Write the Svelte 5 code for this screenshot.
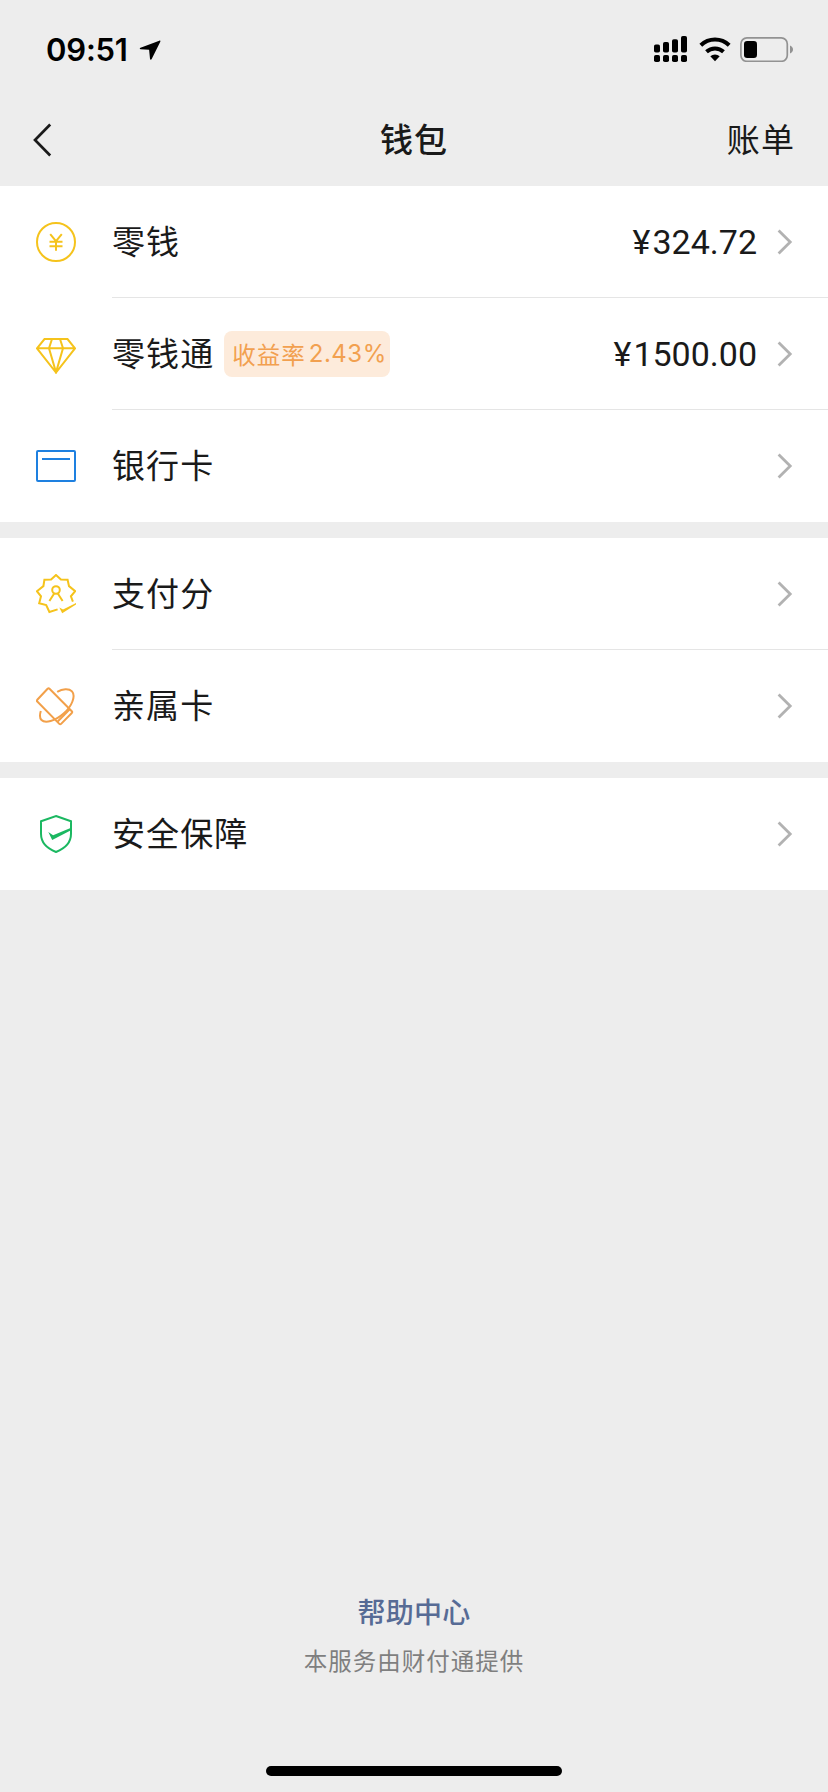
<script>
  const groups = [
    [
      { icon: 'coin', label: '零钱', amount: '324.72' },
      { icon: 'diamond', label: '零钱通', tag: '收益率', rate: '2.43%', amount: '1500.00' },
      { icon: 'card', label: '银行卡' }
    ],
    [
      { icon: 'score', label: '支付分' },
      { icon: 'family', label: '亲属卡' }
    ],
    [{ icon: 'shield', label: '安全保障' }]
  ];
</script>

<div class="screen">
  <header>
    <div class="status">
      <div class="clock">
        <span>09:51</span>
        <svg width="22" height="21" viewBox="0 0 22 21"><path d="M20.3.7 1.5 7.8c-1 .4-.9 1.3.1 1.4l8.5.6.9 9c.1 1.2 1.2 1.3 1.7.2L21.3 1.7c.3-.8-.2-1.3-1-1Z" /></svg>
      </div>
      <div class="signals">
        <svg width="34" height="27" viewBox="0 0 34 27">
          <rect x="0" y="8.5" width="6" height="8" rx="1.8" /><rect x="9" y="6" width="6" height="10.5" rx="1.8" />
          <rect x="18" y="3.3" width="6" height="13.2" rx="1.8" /><rect x="27" y="0" width="6" height="16.5" rx="1.8" />
          <rect x="0" y="19" width="6" height="7" rx="1.8" /><rect x="9" y="19" width="6" height="7" rx="1.8" />
          <rect x="18" y="19" width="6" height="7" rx="1.8" /><rect x="27" y="19" width="6" height="7" rx="1.8" />
        </svg>
        <svg class="wifi" width="32" height="25" viewBox="0 0 32 25">
          <path d="M1.8 8.2a20.5 20.5 0 0 1 28.4 0M7.5 14.7a12.6 12.6 0 0 1 17 0" fill="none" stroke="#000" stroke-width="4" />
          <path d="M11.3 19.3a7.3 7.3 0 0 1 9.4 0L16 24.2Z" />
        </svg>
        <svg class="battery" width="54" height="25" viewBox="0 0 54 25">
          <rect x=".9" y=".9" width="46.4" height="23.4" rx="6" fill="none" stroke="#929292" stroke-width="1.7" />
          <rect x="4" y="4" width="13" height="17" rx="3.2" />
          <path d="M50 8.5c4 1.5 4 6.5 0 8Z" fill="#929292" />
        </svg>
      </div>
    </div>
    <nav>
      <svg class="back" width="20" height="34" viewBox="0 0 20 34"><path d="M17.2 1.5 2 17l15.2 15.5" fill="none" stroke="#1a1a1a" stroke-width="2.7" /></svg>
      <h1>钱包</h1>
      <span class="bill">账单</span>
    </nav>
  </header>

  <main>
    {#each groups as group}
      <section>
        {#each group as item}
          <div class="row">
            <svg class="icon {item.icon}" width="40" height="40" viewBox="0 0 40 40">
              {#if item.icon === 'coin'}
                <circle cx="20" cy="20" r="19" />
                <path d="m14.2 12.2 5.8 7 5.8-7M20 19v9.8M13.5 19.8h13M13.5 24.2h13" />
              {:else if item.icon === 'diamond'}
                <path d="M8.5 5h23L39 14.3 20 38.5 1 14.3ZM1 14.3h38M16 5l-3 9.3 7 24 7-24L24 5" />
              {:else if item.icon === 'card'}
                <rect x="1" y="5" width="38" height="30" rx="1" />
                <path d="M6 13h28" />
              {:else if item.icon === 'score'}
                <path d="M21.6 35.4 13.4 38l-3.2-7-7-1.8L5 22.3.9 17.2l6.5-5.1L8.4 5.8l6.7-.2L20 1l4.9 4.6 6.7.2 1.4 6.3 6.2 5.1-4.3 5.1 2 5.4" />
                <circle cx="20" cy="16" r="3.8" />
                <path d="M18.2 19.5 13.4 27M21.8 19.5l4.8 7.5" />
                <path class="solid" d="m23.3 33.5 3.7 2 13-6.6v1.5l-13.8 8.8Z" />
              {:else if item.icon === 'family'}
                <path d="M11.6 2.8 1.3 13.7q-.9.9 0 1.8l22 22.4q.9.9 1.8 0L35.8 27q.9-.9 0-1.8L13.5 2.8q-.9-.9-1.9 0Z" />
                <path d="M21.2 5.8C26.5 2.7 33 2.2 36 5.4c4 4.5-.1 15-8.4 22.2C19 35.2 9 37.8 5.5 34c-2-2.1-1.8-5.5-.7-9" />
                <path d="m33.7 23.2-12 12.3" />
              {:else}
                <path d="M20 2 35 7.3v12.5C35 28.5 28.5 34.7 20 38 11.5 34.7 5 28.5 5 19.8V7.3Z" />
                <path class="solid" d="m12.3 18 4.8 3.3L34.5 14v2.6L16.2 26Z" />
              {/if}
            </svg>
            <div class="body">
              <span class="label">{item.label}</span>
              {#if item.tag}
                <span class="tag">{item.tag}<b>{item.rate}</b></span>
              {/if}
              {#if item.amount}
                <span class="amount"><i>¥</i>{item.amount}</span>
              {/if}
              <svg class="chevron" width="16" height="26" viewBox="0 0 16 26"><path d="m1.6 1.6 11.6 11.4L1.6 24.4" fill="none" stroke="#b2b2b2" stroke-width="2.8" /></svg>
            </div>
          </div>
        {/each}
      </section>
    {/each}
  </main>

  <footer>
    <a href="#help">帮助中心</a>
    <p>本服务由财付通提供</p>
    <div class="home"></div>
  </footer>
</div>

<style>
  :global(body) { background: #ededed; }
  .screen {
    width: 828px;
    height: 1792px;
    display: flex;
    flex-direction: column;
    background: #ededed;
    color: #1a1a1a;
    font-family: Inter, "Noto Sans CJK SC", sans-serif;
    overflow: hidden;
  }
  svg { display: block; flex: none; }
  header { height: 186px; flex: none; }
  .status {
    height: 98px;
    display: flex;
    align-items: center;
    justify-content: space-between;
    padding: 0 34px 0 46px;
    box-sizing: border-box;
    color: #000;
  }
  .clock { display: flex; align-items: center; gap: 10px; font-size: 31px; line-height: 40px; font-weight: 600; padding-top: 2px; }
  .clock span { width: 83px; letter-spacing: -0.2px; white-space: nowrap; }
  .signals { display: flex; align-items: center; padding-top: 1px; }
  .wifi { margin-left: 10.5px; }
  .battery { margin-left: 9.5px; }
  nav {
    height: 84px;
    display: grid;
    grid-template-columns: 1fr auto 1fr;
    align-items: center;
    padding: 0 33px;
  }
  h1, .bill, .label { margin: 0; font-size: 33px; letter-spacing: 1.1px; line-height: 48px; }
  h1 { font-weight: 500; }
  .bill { justify-self: end; font-weight: 400; }
  main { display: flex; flex-direction: column; gap: 16px; }
  section { background: #fff; }
  .row { height: 112px; display: flex; align-items: center; padding-left: 36px; gap: 36px; }
  .body {
    height: 112px;
    flex: 1;
    box-sizing: border-box;
    display: flex;
    align-items: center;
    padding-right: 35px;
    border-bottom: 1px solid #e5e5e5;
  }
  .row:last-child .body { border-color: transparent; }
  .icon { fill: none; stroke-width: 2; stroke: #f5c31c; }
  .icon .solid { stroke: none; fill: #f5c31c; }
  .icon.card { stroke: #1e80e0; }
  .icon.family { stroke: #f2a04a; }
  .icon.shield { stroke: #1bb861; }
  .icon.shield .solid { fill: #1bb861; }
  .tag {
    width: 166px;
    height: 46px;
    margin-left: 10px;
    box-sizing: border-box;
    padding-left: 8px;
    display: flex;
    align-items: center;
    border-radius: 8px;
    background: #fdebdb;
    color: #f2a04f;
    font-size: 23.5px;
    letter-spacing: 1px;
    white-space: nowrap;
  }
  .tag b { font-weight: 400; font-size: 24px; margin-left: 3px; letter-spacing: 0.5px; }
  .amount { margin-left: auto; font: 400 34px/48px Roboto, sans-serif; }
  .amount i { font-style: normal; margin-right: 2px; }
  .chevron { margin-left: auto; }
  .amount + .chevron { margin-left: 20px; }
  footer { margin-top: auto; display: flex; flex-direction: column; align-items: center; }
  footer a { color: #576b95; text-decoration: none; font-size: 28px; line-height: 40px; font-weight: 500; letter-spacing: 0.3px; }
  footer p { margin: 12px 0 0; color: #7f7f7f; font-size: 23.5px; line-height: 34px; letter-spacing: 1px; }
  .home { width: 296px; height: 10px; border-radius: 5px; background: #000; margin: 87px 0 16px; }
</style>
